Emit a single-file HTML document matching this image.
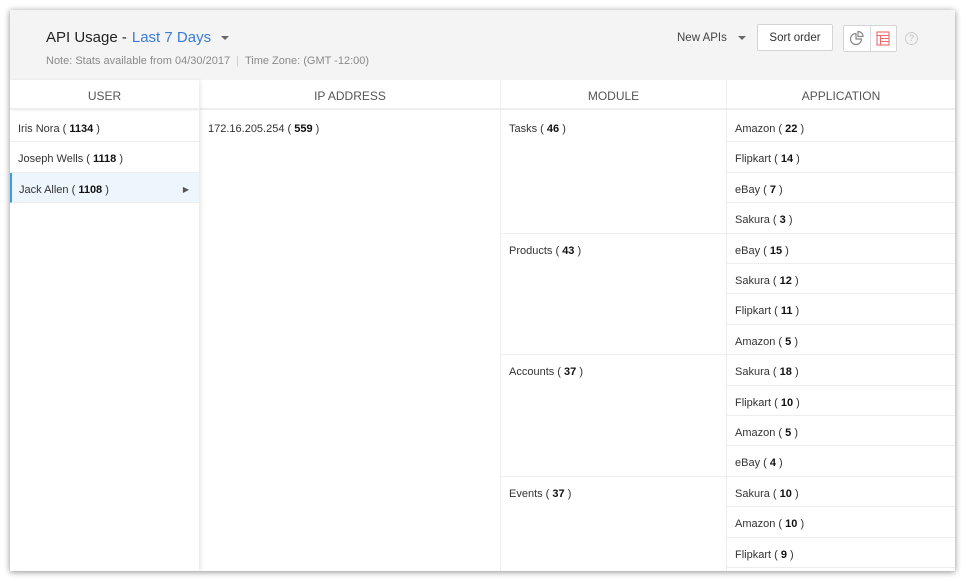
<!DOCTYPE html>
<html><head><meta charset="utf-8"><style>
*{box-sizing:border-box;margin:0;padding:0}
body{width:966px;height:581px;background:#fff;font-family:"Liberation Sans",sans-serif;position:relative;overflow:hidden;color:#333}
.panel{position:absolute;left:10px;top:10px;width:945px;height:561px;background:#fff;box-shadow:0 1px 6px rgba(0,0,0,.45);overflow:hidden}
.hdr{position:absolute;left:0;top:0;width:945px;height:70px;background:#f4f4f4}
.title{position:absolute;left:36px;top:19px;font-size:15px;color:#222}
.title span{color:#3a7bd5;margin-left:5px}
.caret{display:inline-block;width:0;height:0;border-left:4px solid transparent;border-right:4px solid transparent;border-top:4px solid #666;vertical-align:middle;margin-left:10px}
.note{position:absolute;left:36px;top:45px;font-size:11px;color:#8a8a8a}
.newapi{position:absolute;left:667px;top:22px;font-size:11.5px;color:#444}
.sort{position:absolute;left:747px;top:14px;width:76px;height:27px;border:1px solid #d4d4d4;background:#fff;border-radius:2px;font-size:11.5px;color:#333;text-align:center;line-height:27px}
.ib{position:absolute;left:833px;top:15px;width:54px;height:27px;border:1px solid #d4d4d4;background:#fff;border-radius:2px}
.ib .sep{position:absolute;left:26px;top:0;width:1px;height:25px;background:#ddd}
.help{position:absolute;left:895px;top:22px;width:13px;height:13px;border:1px solid #ccc;border-radius:50%;font-size:9px;color:#bbb;text-align:center;line-height:11px}
.ch{position:absolute;top:70px;height:30px;font-size:12px;color:#555;text-align:center;line-height:32px;background:#fff;border-bottom:2px solid #eee}
.col{position:absolute;top:100px;bottom:0}
.cell{position:absolute;font-size:11px;color:#333;padding-left:8px;padding-top:2px;line-height:30px;height:30.4px;border-bottom:1px solid #eee}
b{font-weight:bold;color:#111}
</style></head><body>
<div class="panel">
<div class="hdr">
<div class="title">API Usage -<span>Last 7 Days</span><i class="caret"></i></div>
<div class="note">Note: Stats available from 04/30/2017 &nbsp;<span style="color:#ccc">|</span>&nbsp; Time Zone: (GMT -12:00)</div>
<div class="newapi">New APIs <i class="caret" style="margin-left:8px"></i></div>
<div class="sort">Sort order</div>
<div class="ib"><div class="sep"></div>
<svg style="position:absolute;left:5px;top:4px" width="16" height="16" viewBox="0 0 16 16" fill="none" stroke="#888" stroke-width="1.2"><path d="M7 3.5A5.5 5.5 0 1 0 12.5 9H7Z"/><path d="M9 1.5A5 5 0 0 1 14 6.5H9Z"/></svg>
<svg style="position:absolute;left:32px;top:5px" width="14" height="15" viewBox="0 0 14 15" fill="none" stroke="#ec6a6a" stroke-width="1.1"><rect x="1" y="1" width="12" height="13"/><path d="M1 4.5H13M4.5 4.5V14M4.5 7.5H13M4.5 10.5H13"/></svg>
</div>
<div class="help">?</div>
</div>
<div class="ch" style="left:0;width:189px;box-shadow:2px 0 3px rgba(0,0,0,.08);z-index:2">USER</div>
<div class="ch" style="left:190px;width:301px;border-right:1px solid #eee">IP ADDRESS</div>
<div class="ch" style="left:491px;width:226px;border-right:1px solid #eee">MODULE</div>
<div class="ch" style="left:717px;width:228px">APPLICATION</div>

<div class="col" style="left:0;width:189px;box-shadow:2px 0 4px rgba(0,0,0,.1);z-index:1">
<div class="cell" style="top:2px;width:189px">Iris Nora ( <b>1134</b> )</div>
<div class="cell" style="top:32.4px;width:189px">Joseph Wells ( <b>1118</b> )</div>
<div class="cell" style="top:62.8px;width:189px;background:#eef6fd;border-left:2px solid #3a9be8;padding-left:7px">Jack Allen ( <b>1108</b> )<span style="position:absolute;right:10px;top:2px;font-size:8px;color:#555">&#9654;</span></div>
</div>
<div class="col" style="left:190px;width:301px;border-right:1px solid #eee">
<div class="cell" style="top:2px;border:none">172.16.205.254 ( <b>559</b> )</div>
</div>
<div class="col" style="left:491px;width:226px;border-right:1px solid #eee">
<div class="cell" style="top:2px;width:225px;height:121.6px">Tasks ( <b>46</b> )</div>
<div class="cell" style="top:123.6px;width:225px;height:121.6px">Products ( <b>43</b> )</div>
<div class="cell" style="top:245.2px;width:225px;height:121.6px">Accounts ( <b>37</b> )</div>
<div class="cell" style="top:366.8px;width:225px;height:121.6px;border:none">Events ( <b>37</b> )</div>
</div>
<div class="col" style="left:717px;width:228px">
<div class="cell" style="top:2px;width:228px">Amazon ( <b>22</b> )</div>
<div class="cell" style="top:32.4px;width:228px">Flipkart ( <b>14</b> )</div>
<div class="cell" style="top:62.8px;width:228px">eBay ( <b>7</b> )</div>
<div class="cell" style="top:93.2px;width:228px">Sakura ( <b>3</b> )</div>
<div class="cell" style="top:123.6px;width:228px">eBay ( <b>15</b> )</div>
<div class="cell" style="top:154px;width:228px">Sakura ( <b>12</b> )</div>
<div class="cell" style="top:184.4px;width:228px">Flipkart ( <b>11</b> )</div>
<div class="cell" style="top:214.8px;width:228px">Amazon ( <b>5</b> )</div>
<div class="cell" style="top:245.2px;width:228px">Sakura ( <b>18</b> )</div>
<div class="cell" style="top:275.6px;width:228px">Flipkart ( <b>10</b> )</div>
<div class="cell" style="top:306px;width:228px">Amazon ( <b>5</b> )</div>
<div class="cell" style="top:336.4px;width:228px">eBay ( <b>4</b> )</div>
<div class="cell" style="top:366.8px;width:228px">Sakura ( <b>10</b> )</div>
<div class="cell" style="top:397.2px;width:228px">Amazon ( <b>10</b> )</div>
<div class="cell" style="top:427.6px;width:228px">Flipkart ( <b>9</b> )</div>
</div>
</div>
</body></html>
